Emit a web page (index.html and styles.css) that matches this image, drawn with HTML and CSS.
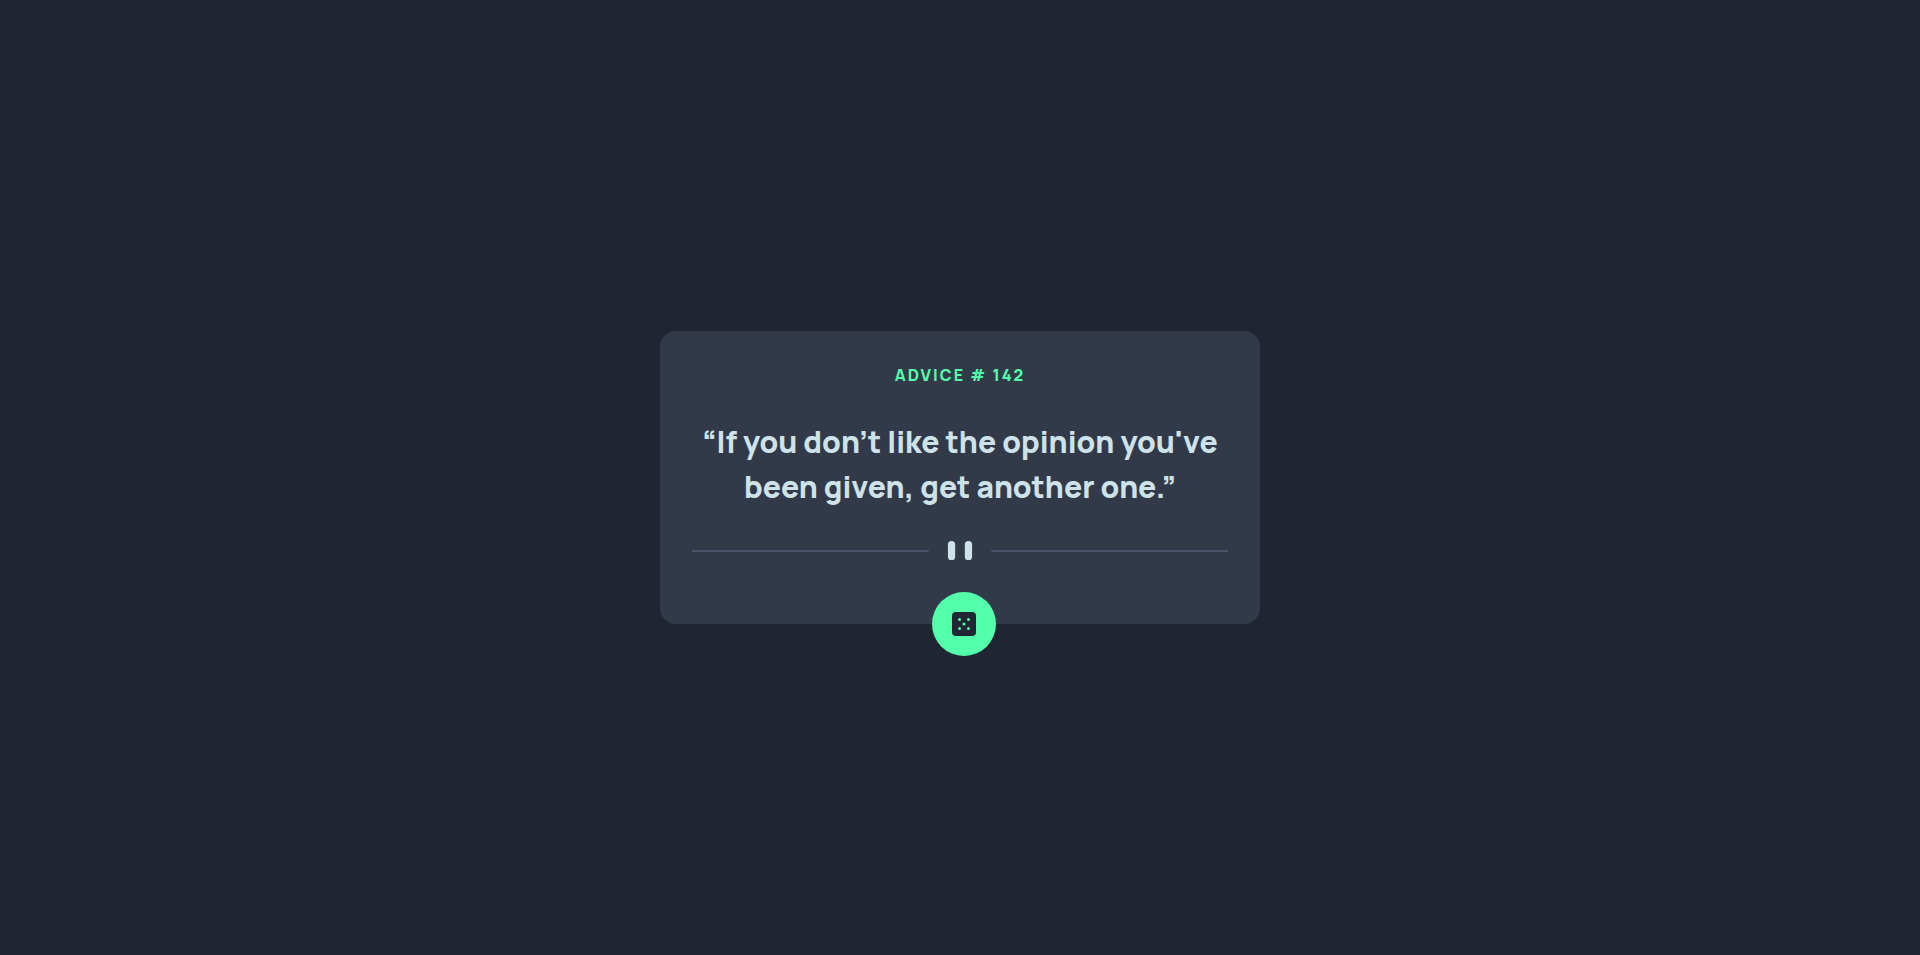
FILE: index.html
```html
<!DOCTYPE html>
<html lang="en">
<head>
<meta charset="utf-8">
<meta name="viewport" content="width=device-width, initial-scale=1">
<title>Advice generator</title>
<link rel="stylesheet" href="styles.css">
</head>
<body>
<main class="card">
  <h1 class="card-label">Advice # 142</h1>
  <p class="card-quote">“If you don’t like the opinion you've been given, get another one.”</p>
  <svg class="divider" viewBox="0 0 444 16" aria-hidden="true">
    <path fill="#4f5d74" fill-opacity=".8" d="M0 7.46h196v1.66H0zM248 7.46h196v1.66H248z"/>
    <g fill="#cee3e9"><rect x="212" width="6" height="16" rx="3"/><rect x="226" width="6" height="16" rx="3"/></g>
  </svg>
  <button class="dice" type="button" aria-label="New advice">
    <svg width="24" height="24" viewBox="0 0 24 24" aria-hidden="true">
      <rect width="24" height="24" rx="3.75" fill="#202733"/>
      <g fill="#53ffaa"><circle cx="7.5" cy="7.5" r="1.5"/><circle cx="16.5" cy="7.5" r="1.5"/><circle cx="12" cy="12" r="1.5"/><circle cx="7.5" cy="16.5" r="1.5"/><circle cx="16.5" cy="16.5" r="1.5"/></g>
    </svg>
  </button>
</main>
</body>
</html>
```
FILE: styles.css
```css
* { box-sizing: border-box; }

body {
  margin: 0;
  min-height: 100vh;
  display: grid;
  place-items: center;
  background: #1f2632;
  font-family: Manrope, Inter, "Liberation Sans", sans-serif;
}

.card {
  position: relative;
  width: 100%;
  max-width: 600px;
  padding: 32px 32px 64px;
  display: flex;
  flex-direction: column;
  gap: 32px;
  border-radius: 16px;
  background: #323a49;
  text-align: center;
}

.card-label {
  margin: 0;
  color: #53ffaa;
  font-size: 16px;
  line-height: 24px;
  font-weight: 800;
  letter-spacing: 2px;
  text-transform: uppercase;
}

.card-quote {
  margin: 0;
  color: #cee3e9;
  font-size: 30px;
  line-height: 45px;
  font-weight: 800;
}

.divider { display: block; width: 100%; }

.dice {
  position: absolute;
  left: calc(50% - 28px);
  bottom: -32px;
  width: 64px;
  height: 64px;
  display: grid;
  place-items: center;
  padding: 0;
  border: 0;
  border-radius: 50%;
  background: #53ffaa;
  cursor: pointer;
}
```
